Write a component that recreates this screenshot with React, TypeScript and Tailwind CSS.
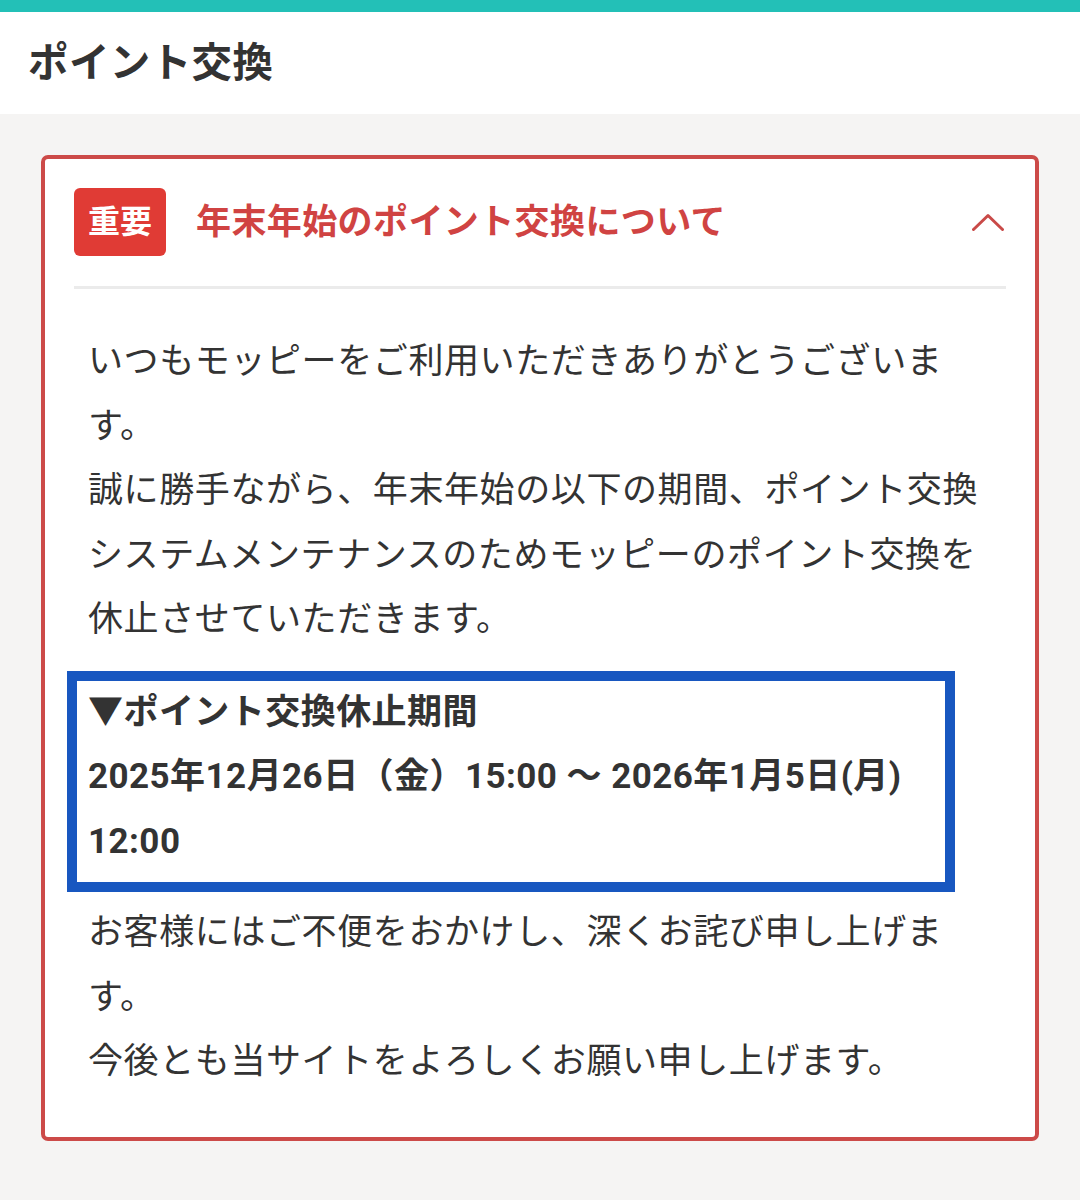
import React from "react";

const FONT = 'Roboto, "Noto Sans CJK JP", sans-serif';

function ChevronUp() {
  return (
    <svg width="32" height="18" viewBox="0 0 32 18" fill="none" className="block">
      <path d="M1.5 16.5 L16 2.5 L30.5 16.5" stroke="#c94a48" strokeWidth="3" strokeLinecap="round" strokeLinejoin="round" />
    </svg>
  );
}

export default function App() {
  return (
    <div className="min-h-[1200px] w-[1080px] bg-[#f5f4f3] text-[#333333]" style={{ fontFamily: FONT }}>
      <div className="h-[12px] bg-[#23c0b7]" />
      <header className="flex h-[102px] items-center bg-white pl-[28px]">
        <h1 className="text-[40.5px] font-bold leading-none tracking-[0.4px] text-[#333333]">ポイント交換</h1>
      </header>

      <main className="px-[41px] pt-[41px] pb-[61px]">
        <section className="rounded-[7px] border-[4px] border-[#cc4a48] bg-white px-[29px] pt-[29px] pb-[42px]">
          <div className="flex items-center gap-[30px] pb-[30px]">
            <span className="flex h-[68px] w-[92px] shrink-0 items-center justify-center rounded-[6px] bg-[#e03b35] text-[32px] font-bold leading-none text-white">
              重要
            </span>
            <h2 className="flex-1 text-[35px] font-bold leading-none tracking-[0.4px] text-[#d04342]">
              年末年始のポイント交換について
            </h2>
            <div className="pr-[2px]">
              <ChevronUp />
            </div>
          </div>
          <div className="h-[3px] bg-[#ebebeb]" />

          <div className="pt-[41px] pl-[14px] text-[35px] leading-[64.5px] tracking-[0.6px]">
            <p>
              いつもモッピーをご利用いただきありがとうございます。
              <br />
              誠に勝手ながら、年末年始の以下の期間、ポイント交換システムメンテナンスのためモッピーのポイント交換を休止させていただきます。
            </p>

            <div className="mt-[18px] mb-[9px] ml-[-21px] w-[888px] border-[10px] border-[#1857c0] pb-[8px] pl-[11px] font-bold tracking-[0.45px]">
              <p>▼ポイント交換休止期間</p>
              <p>2025年12月26日（金）15:00 〜 2026年1月5日(月) 12:00</p>
            </div>

            <p>
              お客様にはご不便をおかけし、深くお詫び申し上げます。
              <br />
              今後とも当サイトをよろしくお願い申し上げます。
            </p>
          </div>
        </section>
      </main>
    </div>
  );
}
